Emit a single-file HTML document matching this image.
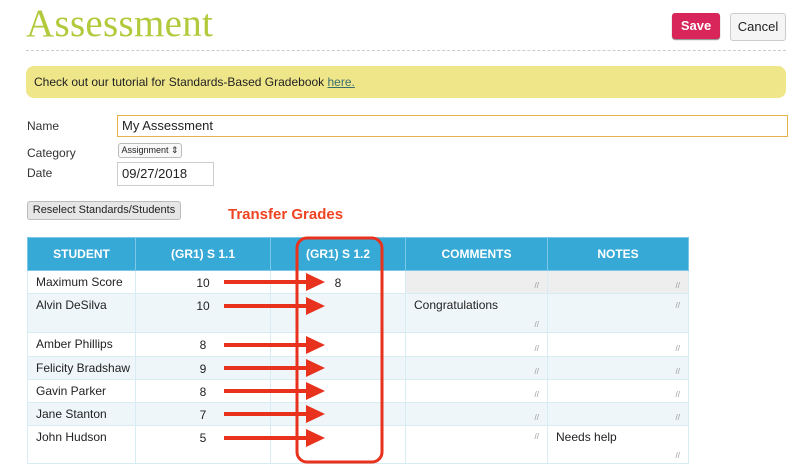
<!DOCTYPE html>
<html><head><style>
*{box-sizing:border-box}
body{margin:0;width:809px;height:476px;background:#fff;font-family:"Liberation Sans",sans-serif;position:relative;overflow:hidden;color:#222}
.a{position:absolute}
.t{font-size:12px}
table{position:absolute;left:27px;top:237px;border-collapse:collapse;font-size:12px}
td,th{padding:0;border:1px solid #d8ecf3}
th{background:#36a9d6;color:#fff;font-weight:bold;height:33px;font-size:12px;border-color:#7cc7e5}
td{vertical-align:top;position:relative}
tr.s td{background:#eef6f9}
.n{padding:4px 0 0 8px}
.c{text-align:center;padding-top:5px}
.g{position:absolute;right:8px;bottom:3px;font-size:8px;color:#999}
</style></head><body>
<div class="a" style="left:26px;top:1px;font-family:'Liberation Serif',serif;font-size:39px;color:#b2c93b;letter-spacing:0.3px">Assessment</div>
<div class="a" style="left:672px;top:13px;width:48px;height:26px;background:#d8255a;border-radius:3px;color:#fff;font-weight:bold;font-size:13px;text-align:center;line-height:26px;box-shadow:0 1px 1px #888">Save</div>
<div class="a" style="left:730px;top:13px;width:56px;height:28px;background:#f5f5f5;border:1px solid #ccc;border-radius:3px;font-size:13px;text-align:center;line-height:26px">Cancel</div>
<div class="a" style="left:26px;top:50px;width:760px;border-top:1px dashed #ccc"></div>
<div class="a t" style="left:26px;top:66px;width:760px;height:32px;background:#efe68a;border-radius:8px;line-height:32px"><span style="padding-left:8px">Check out our tutorial for Standards-Based Gradebook <u style="color:#3a6e6e">here.</u></span></div>
<div class="a t" style="left:27px;top:119px;color:#333">Name</div>
<div class="a t" style="left:117px;top:115px;width:671px;height:22px;border:1px solid #e8b04a;line-height:20px;padding-left:4px;font-size:13px">My Assessment</div>
<div class="a t" style="left:27px;top:146px;color:#333">Category</div>
<div class="a" style="left:118px;top:143px;width:64px;height:15px;border:1px solid #bbb;border-radius:3px;font-size:9px;line-height:13px;text-align:center;background:#f8f8f8">Assignment ⇕</div>
<div class="a t" style="left:27px;top:166px;color:#333">Date</div>
<div class="a" style="left:117px;top:162px;width:97px;height:24px;border:1px solid #ccc;font-size:13px;line-height:22px;padding-left:4px">09/27/2018</div>
<div class="a" style="left:27px;top:201px;width:154px;height:19px;border:1px solid #bbb;border-radius:3px;background:#e6e6e6;font-size:11px;text-align:center;line-height:17px">Reselect Standards/Students</div>
<div class="a" style="left:228px;top:206px;color:#ee4422;font-weight:bold;font-size:15px">Transfer Grades</div>
<table>
<tr><th style="width:108px">STUDENT</th><th style="width:135px">(GR1) S 1.1</th><th style="width:135px">(GR1) S 1.2</th><th style="width:142px">COMMENTS</th><th style="width:141px">NOTES</th></tr>
<tr style="height:23px"><td class="n">Maximum Score</td><td class="c">10</td><td class="c">8</td><td style="background:#eee"><span class="g">//</span></td><td style="background:#eee"><span class="g">//</span></td></tr>
<tr class="s" style="height:39px"><td class="n">Alvin DeSilva</td><td class="c">10</td><td></td><td class="n">Congratulations<span class="g">//</span></td><td><span class="g" style="bottom:22px">//</span></td></tr>
<tr style="height:24px"><td class="n">Amber Phillips</td><td class="c">8</td><td></td><td><span class="g">//</span></td><td><span class="g">//</span></td></tr>
<tr class="s" style="height:23px"><td class="n">Felicity Bradshaw</td><td class="c">9</td><td></td><td><span class="g">//</span></td><td><span class="g">//</span></td></tr>
<tr style="height:23px"><td class="n">Gavin Parker</td><td class="c">8</td><td></td><td><span class="g">//</span></td><td><span class="g">//</span></td></tr>
<tr class="s" style="height:23px"><td class="n">Jane Stanton</td><td class="c">7</td><td></td><td><span class="g">//</span></td><td><span class="g">//</span></td></tr>
<tr style="height:38px"><td class="n">John Hudson</td><td class="c">5</td><td></td><td><span class="g" style="bottom:22px">//</span></td><td class="n">Needs help<span class="g">//</span></td></tr>
</table>
<svg class="a" style="left:0;top:0" width="809" height="476">
<rect x="297" y="238" width="85" height="224" rx="10" fill="none" stroke="#e8321e" stroke-width="3"/>
<g fill="#e8321e">
<g id="ar"><rect x="224" y="280" width="84" height="4"/><polygon points="306,273 325,282 306,291"/></g>
<use href="#ar" y="24"/><use href="#ar" y="63"/><use href="#ar" y="86"/><use href="#ar" y="109"/><use href="#ar" y="132"/><use href="#ar" y="156"/>
</g>
</svg>
</body></html>
